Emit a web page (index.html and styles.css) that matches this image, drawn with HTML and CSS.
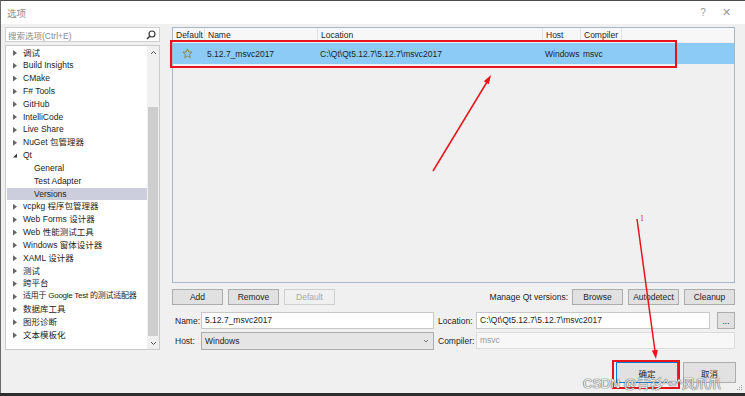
FILE: index.html
```html
<!DOCTYPE html>
<html lang="zh-CN">
<head>
  <meta charset="UTF-8">
  <title>选项</title>
  <link rel="stylesheet" href="styles.css">
</head>
<body>
  <div class="window">
    <div class="titlebar">
      <span class="title">选项</span>
      <span class="tb-btn">?</span>
      <span class="tb-btn close">✕</span>
    </div>

    <div class="content">
      <!-- left: search + tree -->
      <div class="nav">
        <div class="search">
          <span class="placeholder">搜索选项(Ctrl+E)</span>
          <svg class="search-icon" width="10" height="10" viewBox="0 0 10 10">
            <circle cx="6" cy="4" r="3" fill="none" stroke="#333" stroke-width="1.1"/>
            <path d="M4 6 L1 9" stroke="#333" stroke-width="1.4"/>
          </svg>
        </div>
        <div class="tree">
          <ul class="tree-list">
            <li class="node">调试</li>
            <li class="node">Build Insights</li>
            <li class="node">CMake</li>
            <li class="node">F# Tools</li>
            <li class="node">GitHub</li>
            <li class="node">IntelliCode</li>
            <li class="node">Live Share</li>
            <li class="node">NuGet 包管理器</li>
            <li class="node open">Qt</li>
            <li class="leaf">General</li>
            <li class="leaf">Test Adapter</li>
            <li class="leaf selected">Versions</li>
            <li class="node">vcpkg 程序包管理器</li>
            <li class="node">Web Forms 设计器</li>
            <li class="node">Web 性能测试工具</li>
            <li class="node">Windows 窗体设计器</li>
            <li class="node">XAML 设计器</li>
            <li class="node">测试</li>
            <li class="node">跨平台</li>
            <li class="node long">适用于 Google Test 的测试适配器</li>
            <li class="node">数据库工具</li>
            <li class="node">图形诊断</li>
            <li class="node">文本模板化</li>
          </ul>
          <div class="vscroll">
            <svg class="sb-arrow" width="7" height="5" viewBox="0 0 7 5"><path d="M1 4 L3.5 1.5 L6 4" fill="none" stroke="#555" stroke-width="1"/></svg>
            <div class="sb-track"><div class="sb-thumb"></div></div>
            <svg class="sb-arrow" width="7" height="5" viewBox="0 0 7 5"><path d="M1 1 L3.5 3.5 L6 1" fill="none" stroke="#555" stroke-width="1"/></svg>
          </div>
        </div>
      </div>

      <!-- right: versions -->
      <div class="main">
        <div class="versions">
          <div class="vrow vhead">
            <span>Default</span>
            <span>Name</span>
            <span>Location</span>
            <span>Host</span>
            <span>Compiler</span>
            <span class="filler"></span>
          </div>
          <div class="vrow vsel">
            <span class="star-cell">
              <svg width="11" height="11" viewBox="0 0 12 12">
                <path d="M6 1 L7.4 4.3 L11 4.6 L8.3 7 L9.1 10.6 L6 8.7 L2.9 10.6 L3.7 7 L1 4.6 L4.6 4.3 Z" fill="none" stroke="#8c7a2c" stroke-width="0.9" stroke-linejoin="round"/>
              </svg>
            </span>
            <span>5.12.7_msvc2017</span>
            <span>C:\Qt\Qt5.12.7\5.12.7\msvc2017</span>
            <span>Windows</span>
            <span>msvc</span>
            <span class="filler"></span>
          </div>
        </div>

        <div class="toolbar">
          <button class="btn">Add</button>
          <button class="btn">Remove</button>
          <button class="btn" disabled>Default</button>
          <span class="manage-label">Manage Qt versions:</span>
          <button class="btn">Browse</button>
          <button class="btn">Autodetect</button>
          <button class="btn">Cleanup</button>
        </div>

        <div class="field-row">
          <label class="lbl">Name:</label>
          <div class="input name-input">5.12.7_msvc2017</div>
          <label class="lbl lbl-right">Location:</label>
          <div class="input grow">C:\Qt\Qt5.12.7\5.12.7\msvc2017</div>
          <button class="btn dots">...</button>
        </div>

        <div class="field-row">
          <label class="lbl">Host:</label>
          <div class="combo name-input">
            <span>Windows</span>
            <svg width="6" height="4" viewBox="0 0 6 4"><path d="M1 1 L3 3 L5 1" fill="none" stroke="#666" stroke-width="0.9"/></svg>
          </div>
          <label class="lbl lbl-right">Compiler:</label>
          <div class="input grow disabled">msvc</div>
        </div>
      </div>
    </div>

    <div class="footer">
      <button class="btn big ok">确定</button>
      <button class="btn big">取消</button>
    </div>

    <!-- screenshot annotations drawn on top -->
    <div class="mark mark-row"></div>
    <div class="mark mark-ok"></div>
    <svg class="annot" width="745" height="396" viewBox="0 0 745 396">
      <line x1="433" y1="171" x2="487" y2="82" stroke="#e8141b" stroke-width="1.5"/>
      <polygon points="491,75 488.9,84.3 483.8,81.2" fill="#e8141b"/>
      <line x1="637" y1="219" x2="655" y2="351" stroke="#e8141b" stroke-width="1.5"/>
      <polygon points="656,359 657.8,349.7 651.8,350.5" fill="#e8141b"/>
      <text x="640" y="221" font-size="8" fill="#e8141b" font-family="Liberation Serif, serif">1</text>
    </svg>
    <div class="watermark">CSDN @青衫^≈^风爪爪</div>
    <svg class="grip" width="6" height="6" viewBox="0 0 6 6">
      <rect x="4" y="0" width="1" height="1" fill="#999"/>
      <rect x="2" y="2" width="1" height="1" fill="#999"/>
      <rect x="4" y="2" width="1" height="1" fill="#999"/>
      <rect x="0" y="4" width="1" height="1" fill="#999"/>
      <rect x="2" y="4" width="1" height="1" fill="#999"/>
      <rect x="4" y="4" width="1" height="1" fill="#999"/>
    </svg>
  </div>
</body>
</html>
```

FILE: styles.css
```css
* {
  box-sizing: border-box;
}

body {
  margin: 0;
  width: 745px;
  height: 396px;
  overflow: hidden;
  background: #2d2d2d;
  font-family: "Liberation Sans", "Noto Sans CJK SC", sans-serif;
  font-size: 8.5px;
  color: #1e1e1e;
}

.window {
  position: relative;
  width: 745px;
  height: 393px;
  background: #f0f0f0;
  border-top: 1px solid #4a4a4a;
  border-left: 1px solid #6a6a6a;
  display: flex;
  flex-direction: column;
}

/* title bar */
.titlebar {
  height: 23px;
  background: #fff;
  display: flex;
  align-items: center;
  padding: 0 10px 0 6px;
}

.title {
  flex: 1;
  color: #8a8a8a;
  font-size: 9.5px;
}

.tb-btn {
  color: #9a9a9a;
  font-size: 10px;
  width: 28px;
  text-align: center;
}

.tb-btn.close {
  width: 18px;
  font-size: 11px;
}

/* content */
.content {
  display: flex;
  gap: 12px;
  padding: 3px 10px 0 4px;
  height: 326px;
}

.nav {
  width: 155px;
  display: flex;
  flex-direction: column;
  gap: 3px;
}

.search {
  height: 15px;
  background: #fff;
  border: 1px solid #cfcfcf;
  display: flex;
  align-items: center;
  padding: 0 3px 0 2px;
}

.placeholder {
  flex: 1;
  color: #8c8c8c;
}

.tree {
  height: 305px;
  background: #fff;
  border: 1px solid #cacaca;
  display: flex;
}

.tree-list {
  list-style: none;
  margin: 0;
  padding: 0.5px 0 0 1px;
  flex: 1;
  min-width: 0;
  overflow: hidden;
}

.tree-list li {
  height: 12.83px;
  line-height: 12.83px;
  white-space: nowrap;
  display: flex;
  align-items: center;
}

.tree-list li.long {
  font-size: 8px;
  letter-spacing: -0.25px;
}

.node {
  padding-left: 6px;
}

.node::before {
  content: "";
  flex: none;
  width: 4px;
  height: 6px;
  margin-right: 6px;
  background: #666;
  clip-path: polygon(0 0, 100% 50%, 0 100%);
}

.node.open::before {
  width: 4px;
  height: 4px;
  background: #333;
  clip-path: polygon(100% 0, 100% 100%, 0 100%);
}

.leaf {
  padding-left: 27px;
}

.leaf.selected {
  background: #cdcedd;
}

.vscroll {
  flex: none;
  width: 12px;
  display: flex;
  flex-direction: column;
  align-items: center;
  padding: 4px 0 3px;
  background: #f0f0f0;
}

.sb-arrow {
  flex: none;
}

.sb-track {
  flex: 1;
  width: 100%;
  padding: 52px 1px 5px;
  display: flex;
}

.sb-thumb {
  flex: 1;
  background: #cdcdcd;
}

/* right side */
.main {
  flex: 1;
  display: flex;
  flex-direction: column;
}

.versions {
  height: 256px;
  border: 1px solid #a9b7c6;
  background: #f0f0f0;
}

.vrow {
  display: grid;
  grid-template-columns: 32px 113px 225px 38px 41px 1fr;
  align-items: center;
}

.vrow span {
  padding-left: 3px;
  white-space: nowrap;
}

.vhead {
  height: 14px;
  background: #f7f7f7;
}

.vhead span {
  border-right: 1px solid #e3e3e3;
  height: 100%;
  line-height: 14px;
}

.vhead span.filler {
  border-right: none;
}

.vsel {
  margin-top: 1px;
  height: 21px;
  background: #8ccbf6;
}

.vsel span {
  padding-left: 2px;
}

.vsel .star-cell {
  padding-left: 9px;
  display: flex;
}

.toolbar {
  margin-top: 6px;
  height: 16px;
  display: flex;
  gap: 5px;
}

.btn {
  font-family: "Liberation Sans", "Noto Sans CJK SC", sans-serif;
  font-size: 8.5px;
  color: #1e1e1e;
  background: #e1e1e1;
  border: 1px solid #adadad;
  padding: 0;
  width: 51px;
  height: 16px;
}

.btn:disabled {
  color: #a8a8a8;
  background: #f0f0f0;
  border-color: #cfcfcf;
}

.manage-label {
  margin-left: auto;
  line-height: 16px;
  margin-right: -1px;
}

.field-row {
  height: 17px;
  margin-top: 7px;
  display: flex;
  align-items: center;
}

.field-row + .field-row {
  margin-top: 3px;
}

.lbl {
  flex: none;
  width: 29px;
  padding-left: 3px;
  white-space: nowrap;
}

.lbl-right {
  width: 42px;
  padding-left: 4px;
}

.input {
  height: 17px;
  background: #fff;
  border: 1px solid #c8c8c8;
  padding-left: 3px;
  line-height: 15px;
  white-space: nowrap;
}

.name-input {
  width: 233px;
}

.grow {
  flex: 1;
}

.input.disabled {
  background: #f7f7f7;
  border-color: #dcdcdc;
  color: #9a9a9a;
}

.combo {
  height: 18px;
  background: #e5e5e5;
  border: 1px solid #acacac;
  display: flex;
  align-items: center;
  justify-content: space-between;
  padding: 0 4px 0 3px;
}

.btn.dots {
  width: 18px;
  height: 17px;
  margin-left: 7px;
  line-height: 10px;
}

/* footer */
.footer {
  display: flex;
  justify-content: flex-end;
  gap: 5px;
  padding: 12px 9px 0 0;
}

.btn.big {
  width: 53px;
  height: 21px;
}

.btn.ok {
  width: 62px;
  border: 1px solid #0078d7;
  box-shadow: inset 0 0 0 1px #e1e1e1;
}

/* annotations */
.mark {
  position: absolute;
  border: 2px solid #e8141b;
}

.mark-row {
  left: 169px;
  top: 39px;
  width: 507px;
  height: 28px;
}

.mark-ok {
  left: 611px;
  top: 359px;
  width: 68px;
  height: 29px;
}

.annot {
  position: absolute;
  left: -1px;
  top: -1px;
  pointer-events: none;
}

.watermark {
  position: absolute;
  left: 582px;
  top: 372px;
  font-size: 13px;
  color: rgba(255, 255, 255, 0.9);
  text-shadow: 0 0 1px #6e6e6e, 0 0 1px #6e6e6e, 0 0 1px #6e6e6e;
  white-space: nowrap;
}

.grip {
  position: absolute;
  right: 2px;
  bottom: 2px;
}
```
